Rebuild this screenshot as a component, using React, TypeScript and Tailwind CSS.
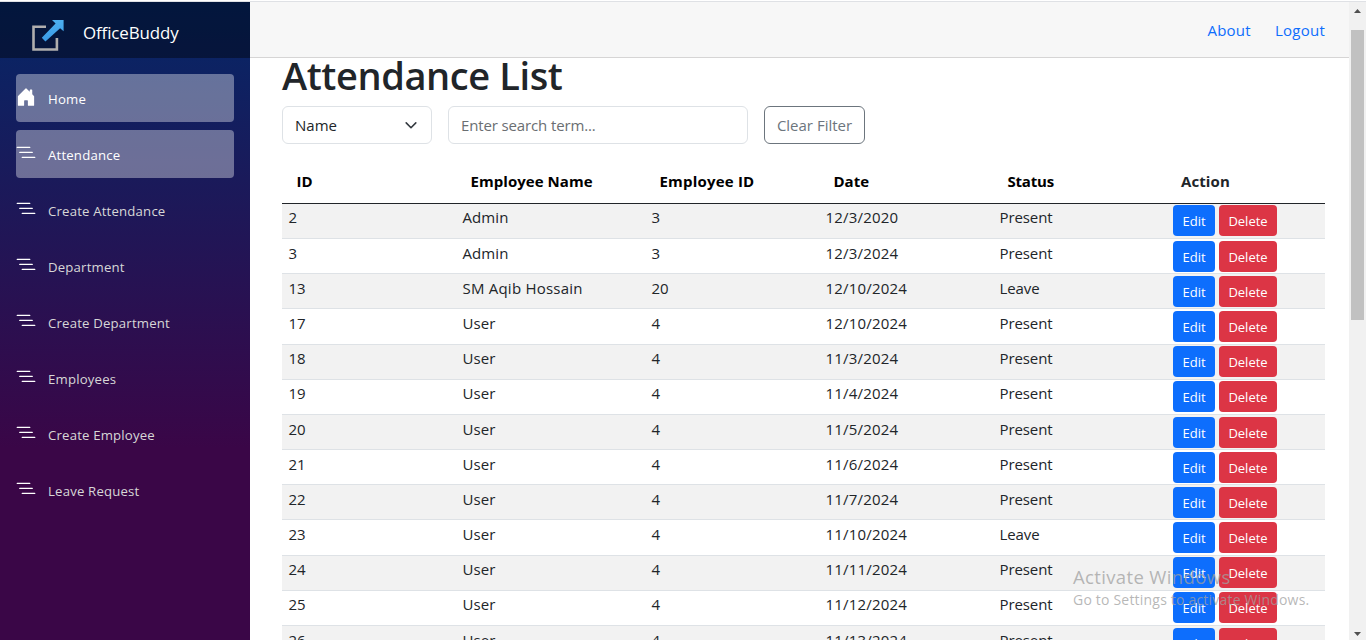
import React from "react";

type Row = [id: string, name: string, empId: string, date: string, status: string];

const rows: Row[] = [
  ["2", "Admin", "3", "12/3/2020", "Present"],
  ["3", "Admin", "3", "12/3/2024", "Present"],
  ["13", "SM Aqib Hossain", "20", "12/10/2024", "Leave"],
  ["17", "User", "4", "12/10/2024", "Present"],
  ["18", "User", "4", "11/3/2024", "Present"],
  ["19", "User", "4", "11/4/2024", "Present"],
  ["20", "User", "4", "11/5/2024", "Present"],
  ["21", "User", "4", "11/6/2024", "Present"],
  ["22", "User", "4", "11/7/2024", "Present"],
  ["23", "User", "4", "11/10/2024", "Leave"],
  ["24", "User", "4", "11/11/2024", "Present"],
  ["25", "User", "4", "11/12/2024", "Present"],
  ["26", "User", "4", "11/13/2024", "Present"],
];

const cellTracking = [
  "tracking-normal",
  "tracking-[0.1px]",
  "tracking-normal",
  "tracking-[0.2px]",
  "tracking-[-0.1px]",
];

const navItems = [
  { label: "Attendance", active: true },
  { label: "Create Attendance" },
  { label: "Department" },
  { label: "Create Department" },
  { label: "Employees" },
  { label: "Create Employee" },
  { label: "Leave Request" },
];

const columns = "grid grid-cols-[174px_189px_174px_174px_173px_159px]";

function HomeIcon() {
  return (
    <svg viewBox="0 0 16 16" fill="white" className="size-5 shrink-0">
      <path d="M6.5 14.5v-3.505c0-.245.25-.495.5-.495h2c.25 0 .5.25.5.5v3.5a.5.5 0 0 0 .5.5h4a.5.5 0 0 0 .5-.5v-7a.5.5 0 0 0-.146-.354L13 5.793V2.5a.5.5 0 0 0-.5-.5h-1a.5.5 0 0 0-.5.5v1.293L8.354 1.146a.5.5 0 0 0-.708 0l-6 6A.5.5 0 0 0 1.5 7.5v7a.5.5 0 0 0 .5.5h4a.5.5 0 0 0 .5-.5Z" />
    </svg>
  );
}

function ListNestedIcon() {
  return (
    <svg viewBox="0 0 16 16" fill="white" className="size-5 shrink-0">
      <path d="M4.5 11.5A.5.5 0 0 1 5 11h10a.5.5 0 0 1 0 1H5a.5.5 0 0 1-.5-.5zm-2-4A.5.5 0 0 1 3 7h10a.5.5 0 0 1 0 1H3a.5.5 0 0 1-.5-.5zm-2-4A.5.5 0 0 1 1 3h10a.5.5 0 0 1 0 1H1a.5.5 0 0 1-.5-.5z" />
    </svg>
  );
}

function Logo() {
  return (
    <svg width="34" height="34" viewBox="0 0 34 34" fill="none">
      <defs>
        <linearGradient id="arrow" x1="0" y1="0" x2="0" y2="1">
          <stop offset="0" stopColor="#4cb0f0" />
          <stop offset="1" stopColor="#3a9ae6" />
        </linearGradient>
      </defs>
      <path d="M15 8.800H2.500v22.700h23.400V20" stroke="#b0aeae" strokeWidth="2.600" />
      <path d="M21 2h11.600v11.300l-3.500-3.100L14.400 23.400l-3.600-3.700L24.600 5.600z" fill="url(#arrow)" />
    </svg>
  );
}

function NavItem({ label, active, icon }: { label: string; active?: boolean; icon: React.ReactNode }) {
  return (
    <a
      className={`flex h-12 items-start rounded-[4px] ${active ? "bg-white/37 text-white" : "text-[#d7d7d7]"}`}
    >
      <span className="mt-[13px]">{icon}</span>
      <span className="ml-3 text-[13.2px] leading-[50px] tracking-[0.18px] whitespace-nowrap">{label}</span>
    </a>
  );
}

function Sidebar() {
  return (
    <aside className="mt-0.5 h-[638px] w-[250px] shrink-0 bg-[linear-gradient(180deg,rgb(5,39,103)_0%,#3a0647_70%)]">
      <div className="flex h-14 bg-black/40 pt-4 pl-[31px]">
        <Logo />
        <span className="ml-[18px] text-[16.9px] leading-[30px] tracking-[-0.1px] text-white">OfficeBuddy</span>
      </div>
      <nav className="flex flex-col gap-2 px-4 pt-4">
        <NavItem label="Home" active icon={<HomeIcon />} />
        {navItems.map((item) => (
          <NavItem key={item.label} {...item} icon={<ListNestedIcon />} />
        ))}
      </nav>
    </aside>
  );
}

function AttendanceRow({ row, index }: { row: Row; index: number }) {
  const tall = index === 3 || index === 9;
  const tight = [0, 4, 5, 10, 11].includes(index);
  return (
    <div
      className={`${columns} shrink-0 border-b border-[#dee2e6] text-[15px] leading-6 text-[#212529] ${tall ? "h-9" : "h-[35px]"} ${tight ? "pt-px" : "pt-0.5"} ${index % 2 === 0 ? "bg-[#f2f2f2]" : "bg-white"}`}
    >
      {row.map((cell, i) => (
        <div key={i} className={`pl-[6.5px] whitespace-nowrap ${cell === "SM Aqib Hossain" ? "tracking-[0.22px]" : cellTracking[i]}`}>
          {cell}
        </div>
      ))}
      <div className="flex h-[31px] gap-1 pl-[7px] text-[13px] leading-[32px] text-white">
        <button className="w-[42px] rounded-[4px] bg-[#0d6efd]">Edit</button>
        <button className="w-[58px] rounded-[4px] bg-[#dc3545]">Delete</button>
      </div>
    </div>
  );
}

function Scrollbar() {
  return (
    <div className="mt-0.5 flex h-[638px] w-[17px] shrink-0 flex-col items-center bg-[#f1f1f1]">
      <svg width="17" height="28" viewBox="0 0 17 28">
        <path d="M5 11h7L8.500 7z" fill="#505050" />
      </svg>
      <div className="h-[290px] w-[13px] bg-[#c1c1c1]" />
      <svg width="17" height="17" viewBox="0 0 17 17" className="mt-auto">
        <path d="M5 9h7L8.500 13z" fill="#505050" />
      </svg>
    </div>
  );
}

export default function App() {
  return (
    <div className="relative h-[640px] w-[1366px] overflow-hidden bg-white font-['Open_Sans','Noto_Sans',sans-serif]">
      <div className="flex h-full">
        <Sidebar />
        <main className="flex h-full min-w-0 flex-1 flex-col overflow-hidden pt-0.5">
          <header className="flex h-14 shrink-0 justify-end gap-6 border-b border-[#d6d5d5] bg-[#f7f7f7] pr-6 text-[15px] leading-[57px] tracking-[0.25px] text-[#0d6efd]">
            <a>About</a>
            <a>Logout</a>
          </header>
          <div className="flex min-h-0 flex-1 flex-col pr-6 pl-8">
            <h1 className="h-12 shrink-0 text-[38px] leading-[35px] font-semibold tracking-[-0.4px] whitespace-nowrap text-[#212529]">Attendance List</h1>
            <div className="flex h-[38px] shrink-0 gap-4 text-[15px] leading-[36px]">
              <div className="flex w-[150px] items-center justify-between rounded-[6px] border border-[#dee2e6] pr-3 pl-3 text-[#212529]">
                <span>Name</span>
                <svg width="16" height="16" viewBox="0 0 16 16" fill="none">
                  <path d="m2 5 6 6 6-6" stroke="#343a40" strokeWidth="2" strokeLinecap="round" strokeLinejoin="round" transform="translate(1.600 1.900) scale(.8)" />
                </svg>
              </div>
              <div className="w-[300px] rounded-[6px] border border-[#dee2e6] pl-3 tracking-[-0.13px] text-[#6a6e72]">Enter search term...</div>
              <button className="w-[101px] rounded-[6px] border border-[#6c757d] whitespace-nowrap text-[#6c757d]">Clear Filter</button>
            </div>
            <div className={`${columns} mt-4 h-11 shrink-0 border-b border-[#212529] text-[15px] leading-[43px] font-bold text-black`}>
              <div className="pl-[14.5px]">ID</div>
              <div className="pl-[14.5px] tracking-[0.05px]">Employee Name</div>
              <div className="pl-[14.5px] tracking-[0.2px]">Employee ID</div>
              <div className="pl-[14.5px]">Date</div>
              <div className="pl-[14.5px] tracking-[-0.2px]">Status</div>
              <div className="pl-[15px] tracking-[0.1px] text-[#212529]">Action</div>
            </div>
            {rows.map((row, index) => (
              <AttendanceRow key={row[0]} row={row} index={index} />
            ))}
          </div>
        </main>
        <Scrollbar />
      </div>
      <div className="absolute top-px left-0 h-px w-full bg-[#dfe1e5]" />
      <div className="pointer-events-none absolute top-[564px] left-[1073px] whitespace-nowrap text-[#a0a0a0]/75">
        <div className="text-[18.500px] leading-[26px] tracking-[0.36px]">Activate Windows</div>
        <div className="text-[14px] leading-5 tracking-[0.2px]">Go to Settings to activate Windows.</div>
      </div>
    </div>
  );
}
